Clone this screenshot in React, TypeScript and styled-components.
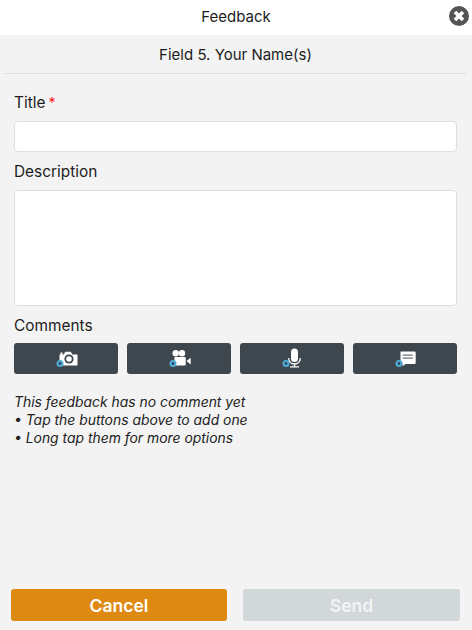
import React from "react";
import styled, { createGlobalStyle } from "styled-components";

const GlobalStyle = createGlobalStyle`
  html, body {
    margin: 0;
    padding: 0;
    background: #f3f3f3;
  }
  * {
    box-sizing: border-box;
  }
`;

const Page = styled.div`
  display: flex;
  flex-direction: column;
  width: 472px;
  height: 630px;
  overflow: hidden;
  background: #f3f3f3;
  color: #1c1c1c;
  font-family: Inter, "Liberation Sans", Arial, sans-serif;
`;

const TopBar = styled.header`
  position: relative;
  display: flex;
  align-items: center;
  justify-content: center;
  height: 35px;
  padding-bottom: 3px;
  background: #fff;
  font-size: 15px;
`;

const CloseButton = styled.button`
  position: absolute;
  top: 6px;
  right: 3px;
  display: flex;
  width: 20px;
  height: 20px;
  padding: 0;
  border: none;
  background: none;
`;

const FieldHeading = styled.div`
  display: flex;
  align-items: center;
  justify-content: center;
  height: 39px;
  margin: 0 6px 0 5px;
  border-bottom: 1px solid #dcdcdc;
  font-size: 15px;
`;

const Form = styled.main`
  display: flex;
  flex: 1;
  flex-direction: column;
  padding: 0 15px 0 14px;
`;

const Label = styled.label<{ $top: number }>`
  display: block;
  height: 18px;
  margin-top: ${(p) => p.$top}px;
  margin-bottom: 10px;
  font-size: 15.4px;
  line-height: 19px;
`;

const Required = styled.span`
  margin-left: 3px;
  font-size: 14px;
  color: #f5101f;
`;

const Input = styled.div`
  height: 31px;
  border: 1px solid #dedede;
  border-radius: 4px;
  background: #fff;
`;

const TextArea = styled(Input)`
  height: 116px;
`;

const CommentButtons = styled.div`
  display: grid;
  grid-template-columns: repeat(4, 104px);
  gap: 9px;
  margin-top: -1px;
`;

const CommentButton = styled.button`
  display: flex;
  align-items: center;
  justify-content: center;
  height: 31px;
  padding: 0;
  border: none;
  border-radius: 3px;
  background: #3f474e;
`;

const Hint = styled.p`
  margin: 19px 0 0;
  font-size: 13.9px;
  font-style: italic;
  line-height: 18px;
  color: #222;
`;

const Footer = styled.footer`
  display: grid;
  grid-template-columns: 216px 217px;
  gap: 16px;
  padding: 0 12px 9px 11px;
`;

const ActionButton = styled.button<{ $disabled?: boolean }>`
  height: 32px;
  padding: 0;
  border: none;
  border-radius: 3px;
  background: ${(p) => (p.$disabled ? "#d2d7da" : "#de8a12")};
  color: ${(p) => (p.$disabled ? "#f2f4f5" : "#fff")};
  font-family: inherit;
  font-size: 17.5px;
  font-weight: 600;
`;

const Badge = () => (
  <>
    <circle cx="9" cy="16.5" r="3.5" fill="#52acd9" />
    <circle cx="9" cy="16.5" r="1.4" fill="#2d4a5e" />
  </>
);

const CameraIcon = () => (
  <svg width="30" height="24" viewBox="0 0 30 24">
    <path
      fill="#fff"
      d="M8.5 7.5h1V5.6h2v1.9h1.2l1.6-2.7h5.5l1.6 2.7H26.5V18.5H9V16H8.5z"
    />
    <circle cx="18" cy="12" r="4.6" fill="#3f474e" />
    <circle cx="18" cy="12" r="2.8" fill="#fff" />
    <Badge />
  </svg>
);

const VideoIcon = () => (
  <svg width="30" height="24" viewBox="0 0 30 24">
    <circle cx="11.7" cy="6.3" r="3.2" fill="#fff" />
    <circle cx="18" cy="6.3" r="3.2" fill="#fff" />
    <rect x="10.5" y="10" width="11.2" height="8.5" rx="0.8" fill="#fff" />
    <path fill="#fff" d="M22.5 14l4.2-3.3v6.8z" />
    <Badge />
  </svg>
);

const MicIcon = () => (
  <svg width="30" height="24" viewBox="0 0 30 24">
    <rect x="14" y="1.5" width="7" height="13.5" rx="3.5" fill="#fff" />
    <path
      fill="none"
      stroke="#fff"
      strokeWidth="1.3"
      d="M11.7 11c0 3.6 2.5 6 5.8 6s5.8-2.4 5.8-6M17.5 17v2.5M13 19.8h9"
    />
    <Badge />
  </svg>
);

const ChatIcon = () => (
  <svg width="30" height="24" viewBox="0 0 30 24">
    <path
      fill="#fff"
      d="M10.5 4.5h14a1.2 1.2 0 0 1 1.2 1.2v10a1.2 1.2 0 0 1-1.2 1.2H15.5l-2.8 2.3v-2.3H10.5z"
    />
    <path fill="#6d7479" d="M12.7 7.4h10v1.4h-10zM12.7 10.4h10v1.4h-10z" />
    <Badge />
  </svg>
);

export default function App() {
  return (
    <Page>
      <GlobalStyle />
      <TopBar>
        Feedback
        <CloseButton aria-label="Close">
          <svg width="20" height="20" viewBox="0 0 20 20">
            <circle cx="10" cy="10" r="10" fill="#555" />
            <path stroke="#fff" strokeWidth="3.6" d="M6 6l8 8M14 6l-8 8" />
          </svg>
        </CloseButton>
      </TopBar>
      <FieldHeading>Field 5. Your Name(s)</FieldHeading>
      <Form>
        <Label $top={19}>
          Title<Required>*</Required>
        </Label>
        <Input />
        <Label $top={10}>Description</Label>
        <TextArea />
        <Label $top={10}>Comments</Label>
        <CommentButtons>
          <CommentButton aria-label="Photo"><CameraIcon /></CommentButton>
          <CommentButton aria-label="Video"><VideoIcon /></CommentButton>
          <CommentButton aria-label="Audio"><MicIcon /></CommentButton>
          <CommentButton aria-label="Text"><ChatIcon /></CommentButton>
        </CommentButtons>
        <Hint>
          This feedback has no comment yet
          <br />• Tap the buttons above to add one
          <br />• Long tap them for more options
        </Hint>
      </Form>
      <Footer>
        <ActionButton>Cancel</ActionButton>
        <ActionButton $disabled>Send</ActionButton>
      </Footer>
    </Page>
  );
}
